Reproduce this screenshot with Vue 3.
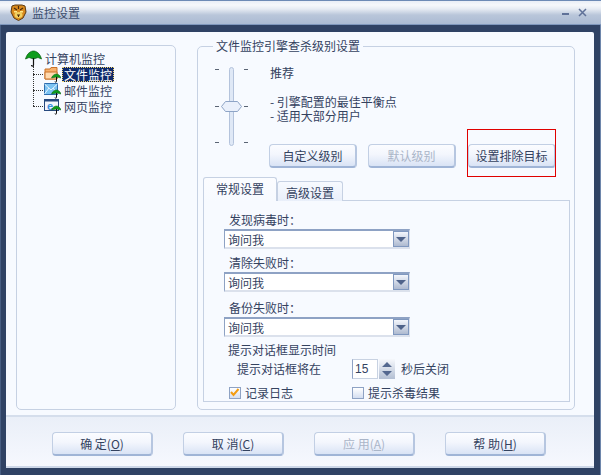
<script setup>
const footerButtons = [
  { label: '确 定', key: 'O' },
  { label: '取 消', key: 'C' },
  { label: '应 用', key: 'A', disabled: true },
  { label: '帮 助', key: 'H' },
]
const combos = [
  { label: '发现病毒时：', gap: 'first' },
  { label: '清除失败时：', gap: 'second' },
  { label: '备份失败时：', gap: 'third' },
]
</script>

<template>
  <div class="win">
    <header class="title">
      <svg class="tiger" width="17" height="17" viewBox="0 0 17 17">
        <path d="M2 2 L5 1 L12 1 L15 2 L16 8 L13 14 L8.500 16.500 L4 14 L1 8 Z" fill="#d98a1e" stroke="#5d3a12" />
        <path d="M4 4 L7 6 M13 4 L10 6 M8.500 2 V5" stroke="#4b2a0c" stroke-width="1.200" />
        <ellipse cx="8.500" cy="11" rx="4" ry="3" fill="#f2d060" />
        <rect x="4" y="7" width="3" height="1.500" fill="#ffe98a" />
        <rect x="10" y="7" width="3" height="1.500" fill="#ffe98a" />
        <path d="M7 11 H10 M8.500 11 V13" stroke="#4b2a0c" />
      </svg>
      <span class="title-text">监控设置</span>
      <span class="win-btns">
        <svg width="8" height="8" viewBox="0 0 8 8"><rect x="0" y="4" width="7" height="2" fill="#5f7198" /></svg>
        <svg width="9" height="9" viewBox="0 0 9 9"><path d="M1 1 L8 8 M8 1 L1 8" stroke="#5f7198" stroke-width="1.500" /></svg>
      </span>
    </header>

    <div class="frame">
      <div class="panel">
        <main class="main">
          <section class="tree-box">
            <div class="tree">
              <div class="root">
                <svg class="umb big" width="17" height="17" viewBox="0 0 17 17">
                  <path d="M0.500 9 C2 3 6 1 8.500 1 C11 1 15 3 16.500 9 L13 7.500 L8.500 9 L4 7.500 Z" fill="#0f9d1c" stroke="#075c10" stroke-width="0.700" />
                  <path d="M8.500 8 V15 C8.500 16.500 6.500 16.500 6.500 15" fill="none" stroke="#111" stroke-width="1.200" />
                </svg>
                <span class="tree-label">计算机监控</span>
              </div>
              <div class="node">
                <svg class="ic" width="17" height="17" viewBox="0 0 17 17">
                  <path d="M1 3 H6 L7 1.500 H13 V13 H1 Z" fill="#f7b06a" stroke="#c9722a" />
                  <path d="M1 6 H13 V13 H1 Z" fill="#ffd9ae" stroke="#c9722a" />
                  <path d="M7.500 12 C8.500 9 11 8 12.500 8 C14 8 16 9 17 12 L12.500 11 Z" fill="#0f9d1c" stroke="#075c10" stroke-width="0.500" />
                  <path d="M12.500 11 V15.500 C12.500 16.500 11 16.500 11 15.500" fill="none" stroke="#111" />
                </svg>
                <span class="tree-label selected">文件监控</span>
              </div>
              <div class="node">
                <svg class="ic" width="17" height="17" viewBox="0 0 17 17">
                  <rect x="0.500" y="1.500" width="13" height="11" fill="#7cc3f2" stroke="#2f6fb0" />
                  <path d="M0.500 2 L7 8 L13.500 2 M0.500 12 L5 6 M13.500 12 L9 6" fill="none" stroke="#e7f5ff" />
                  <path d="M7.500 12 C8.500 9 11 8 12.500 8 C14 8 16 9 17 12 L12.500 11 Z" fill="#0f9d1c" stroke="#075c10" stroke-width="0.500" />
                  <path d="M12.500 11 V15.500 C12.500 16.500 11 16.500 11 15.500" fill="none" stroke="#111" />
                </svg>
                <span class="tree-label">邮件监控</span>
              </div>
              <div class="node">
                <svg class="ic" width="17" height="17" viewBox="0 0 17 17">
                  <rect x="0.500" y="1.500" width="14" height="11" fill="#f3f6fc" stroke="#27497f" />
                  <rect x="1" y="2" width="13" height="1.500" fill="#27497f" />
                  <text x="3" y="11.500" font-size="11" font-weight="700" fill="#3a8fdc" font-family="Liberation Sans, sans-serif">e</text>
                  <path d="M7.500 12 C8.500 9 11 8 12.500 8 C14 8 16 9 17 12 L12.500 11 Z" fill="#0f9d1c" stroke="#075c10" stroke-width="0.500" />
                  <path d="M12.500 11 V15.500 C12.500 16.500 11 16.500 11 15.500" fill="none" stroke="#111" />
                </svg>
                <span class="tree-label">网页监控</span>
              </div>
            </div>
          </section>

          <fieldset class="engine">
            <legend>文件监控引擎查杀级别设置</legend>
            <div class="level">
              <svg class="slider" width="35" height="80" viewBox="0 0 35 80">
                <rect x="15.500" y="0.500" width="4" height="78" rx="2" fill="#dfe8f6" stroke="#b4c3dc" />
                <path d="M1 2.500 H5 M30 2.500 H34 M1 39.500 H5 M30 39.500 H34 M1 75.500 H5 M30 75.500 H34" stroke="#5a6474" />
                <path d="M7.500 39.500 L11.500 34.500 H23.500 L27.500 39.500 L23.500 44.500 H11.500 Z" fill="#eaf0fb" stroke="#8ea4c6" />
              </svg>
              <div class="level-text">
                <p class="rec">推荐</p>
                <p class="desc">- 引擎配置的最佳平衡点<br />- 适用大部分用户</p>
                <div class="level-btns">
                  <button class="btn level-btn">自定义级别</button>
                  <button class="btn level-btn" disabled>默认级别</button>
                  <button class="btn level-btn exclude">设置排除目标<i class="red"></i></button>
                </div>
              </div>
            </div>

            <div class="tabs">
              <span class="tab active">常规设置</span>
              <span class="tab">高级设置</span>
            </div>
            <div class="tab-body">
              <div v-for="c in combos" :key="c.label" class="field" :class="c.gap">
                <div class="field-label">{{ c.label }}</div>
                <div class="combo">
                  <span class="combo-val">询问我</span>
                  <span class="combo-arrow"><i></i></span>
                </div>
              </div>
              <div class="hint">提示对话框显示时间</div>
              <div class="close-row">
                <span class="close-label">提示对话框将在</span>
                <span class="spin-input">15</span>
                <span class="spin-btn">
                  <svg width="16" height="20" viewBox="0 0 16 20">
                    <path d="M8 3 L13 8 H3 Z M3 12 H13 L8 17 Z" fill="#54688f" />
                  </svg>
                </span>
                <span class="close-after">秒后关闭</span>
              </div>
              <div class="check-row">
                <span class="check-item first-check">
                  <span class="box">
                    <svg width="11" height="11" viewBox="0 0 11 11"><path d="M2 5 L4.500 8 L9.500 2" fill="none" stroke="#f39c12" stroke-width="2" /></svg>
                  </span>
                  记录日志
                </span>
                <span class="check-item">
                  <span class="box"></span>
                  提示杀毒结果
                </span>
              </div>
            </div>
          </fieldset>
        </main>

        <footer class="footer">
          <button v-for="b in footerButtons" :key="b.key" class="btn foot-btn" :disabled="b.disabled">
            {{ b.label }}(<u>{{ b.key }}</u>)
          </button>
        </footer>
      </div>
    </div>
  </div>
</template>

<style>
html, body { margin: 0; padding: 0; background: #3a4d72; }
</style>

<style scoped>
.win {
  width: 601px;
  height: 475px;
  display: flex;
  flex-direction: column;
  overflow: hidden;
  background: #37496d;
  color: #34425f;
  font: 12px/14px "Noto Sans CJK SC", "Liberation Sans", sans-serif;
  box-sizing: border-box;
}
.title {
  height: 25px;
  flex: none;
  box-sizing: border-box;
  display: flex;
  align-items: center;
  padding: 0 14px 0 10px;
  background: linear-gradient(#e9eef6 0, #f6f8fb 4px, #e6ebf3 8px, #b9c6da 14px, #a9b9d2 24px);
  border-top: 1px solid #6d8ab5;
  border-bottom: 1px solid #7f97bc;
}
.tiger { margin-right: 5px; }
.title-text { color: #3d4e6e; }
.win-btns { margin-left: auto; display: flex; align-items: center; gap: 8px; }
.frame {
  flex: 1;
  min-height: 0;
  display: flex;
  padding: 7px 6px 7px 6px;
  background: linear-gradient(90deg, #5f789f 0, #2f4264 1px, #2f4264 6px);
  border-right: 1px solid #6e86ab;
  box-sizing: border-box;
  width: 601px;
}
.panel {
  flex: 1;
  display: flex;
  flex-direction: column;
  background: #f7faff;
  border-radius: 2px 2px 0 0;
  min-width: 0;
}
.main {
  height: 385px;
  flex: none;
  box-sizing: border-box;
  border-bottom: 2px solid #d5deec;
  display: flex;
  padding: 13px 19px 5px 10px;
  gap: 21px;
}
.tree-box {
  width: 160px;
  flex: none;
  box-sizing: border-box;
  border: 1px solid #c6d1e3;
  border-radius: 5px;
  padding: 4px 0 0 8px;
}
.tree { position: relative; }
.tree::before {
  content: "";
  position: absolute;
  left: 8px;
  top: 16px;
  height: 40px;
  border-left: 1px dotted #333;
}
.root { display: flex; align-items: center; height: 16px; gap: 1px; }
.node {
  position: relative;
  display: flex;
  align-items: center;
  height: 16px;
  margin-left: 19px;
  gap: 1px;
}
.node::before {
  content: "";
  position: absolute;
  left: -11px;
  top: 8px;
  width: 10px;
  border-top: 1px dotted #333;
}
.tree-label { padding: 0 1px; white-space: nowrap; border: 1px solid transparent; line-height: 13px; }
.selected {
  background: #0f2a6b;
  color: #fff;
  border: 1px dotted #f5d76e;
}
.engine {
  flex: 1;
  min-width: 0;
  margin: 0;
  padding: 0 4px 3px 5px;
  margin-top: -6px;
  border: 1px solid #c6d1e3;
  border-radius: 5px;
  box-sizing: border-box;
}
legend { padding: 0 3px; margin-left: 10px; line-height: 14px; color: #34425f; }
.level { display: flex; gap: 22px; margin-top: 14px; margin-left: 11px; height: 101px; }
.slider { flex: none; margin-top: 0; }
.level-text { flex: none; width: 300px; margin-top: -1px; margin-left: -1px; }
.level-text p { margin: 0; }
.rec { height: 14px; margin-bottom: 15px !important; }
.desc { height: 28px; }
.level-btns { display: flex; gap: 11px; margin-top: 21px; margin-left: -1px; }
.btn {
  box-sizing: border-box;
  font: inherit;
  color: #34425f;
  padding: 0;
  border: 1px solid #c2cfe4;
  border-bottom: 2px solid #9fb4d6;
  border-right: 2px solid #b6c6e0;
  border-radius: 4px;
  background: linear-gradient(#fbfcff 0, #f3f6fd 45%, #d9e3f5 100%);
}
.btn:disabled { color: #aab5c8; }
.level-btn { width: 88px; height: 24px; flex: none; position: relative; }
.exclude { margin-left: 1px; }
.red {
  position: absolute;
  left: -2px;
  top: -16px;
  width: 87px;
  height: 46px;
  border: 1px solid #e00000;
}
.tabs { display: flex; align-items: flex-end; margin-top: 9px; height: 24px; margin-bottom: -1px; position: relative; }
.tab {
  box-sizing: border-box;
  width: 66px;
  height: 20px;
  text-align: center;
  line-height: 21px;
  border: 1px solid #c6d1e3;
  border-bottom: none;
  border-radius: 3px 3px 0 0;
  background: linear-gradient(#f7faff, #e9effa);
}
.tab.active {
  width: 74px;
  height: 24px;
  line-height: 22px;
  background: linear-gradient(#fbfcff, #f7faff);
  position: relative;
  z-index: 1;
}
.tab-body {
  border: 1px solid #c6d1e3;
  height: 202px;
  box-sizing: border-box;
  padding: 12px 0 0 20px;
  margin-right: 0;
}
.field-label { margin-left: 5px; height: 14px; }
.combo {
  margin-top: 2px;
  width: 186px;
  height: 20px;
  box-sizing: border-box;
  display: flex;
  background: #fff;
  border: 1px solid #8ea2c4;
  border-top-width: 2px;
  border-bottom: 2px solid #dbe1ec;
  border-right: 1px solid #dbe1ec;
}
.combo-val { flex: 1; padding-left: 3px; line-height: 17px; }
.combo-arrow {
  width: 16px;
  box-sizing: border-box;
  border: 1px solid #8098bf;
  background: linear-gradient(#f3f6fc, #aebad0);
  display: flex;
  align-items: center;
  justify-content: center;
}
.combo-arrow i {
  width: 0;
  height: 0;
  border: 5px solid transparent;
  border-top: 5px solid #4f638a;
  border-bottom: none;
}
.second { margin-top: 7px; }
.third { margin-top: 9px; }
.hint { margin: 6px 0 0 4px; height: 14px; }
.close-row { display: flex; align-items: center; height: 20px; margin-top: 2px; }
.close-label { width: 115px; margin-left: 13px; }
.spin-input {
  width: 26px;
  height: 20px;
  box-sizing: border-box;
  background: #fff;
  border: 1px solid #c8d2e2;
  border-left: 1px solid #8ea2c4;
  padding-left: 2px;
  line-height: 18px;
  font-family: "Liberation Sans", sans-serif;
}
.spin-btn {
  width: 16px;
  height: 20px;
  margin-left: 1px;
  background: linear-gradient(#f6f8fc, #b3bfd3);
}
.spin-btn svg { display: block; }
.close-after { margin-left: 6px; }
.check-row { display: flex; margin-top: 7px; height: 14px; margin-left: 5px; }
.check-item { display: flex; align-items: center; gap: 4px; }
.first-check { width: 123px; }
.box {
  width: 12px;
  height: 12px;
  box-sizing: border-box;
  border: 1px solid #8ea2c4;
  background: linear-gradient(#fff, #d4def0);
  display: block;
}
.box svg { display: block; margin-top: -1px; margin-left: -1px; }
.footer {
  flex: 1;
  display: flex;
  justify-content: flex-start;
  gap: 30px;
  padding: 15px 0 0 46px;
  background: linear-gradient(#eaeff8 0, #f6f8fe 100%);
  box-sizing: border-box;
  border-bottom: 2px solid #cdd7e8;
}
.foot-btn { width: 101px; height: 24px; flex: none; }
.foot-btn u { text-underline-offset: 1px; }
</style>
